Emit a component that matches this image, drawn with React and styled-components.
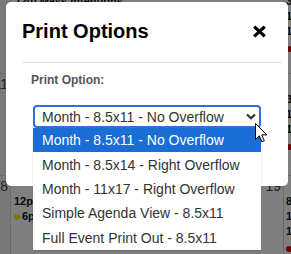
import React from "react";
import styled, { createGlobalStyle } from "styled-components";

const Global = createGlobalStyle`
  html, body { margin: 0; padding: 0; width: 291px; height: 254px; overflow: hidden; background: #fff; }
  body { font-family: "Liberation Sans", Arial, sans-serif; }
  #root { width: 291px; height: 254px; overflow: hidden; }
  * { box-sizing: border-box; }
`;

const Page = styled.div`
  position: relative;
  width: 291px;
  height: 254px;
  overflow: hidden;
`;

const Calendar = styled.div`
  display: grid;
  grid-template-columns: 11px 273px 273px;
  grid-template-rows: 98px 102px 100px;
  width: 557px;
  margin-top: -24px;
  background: #fff;
`;

const Cell = styled.div`
  border-right: 1px solid #d4d4d4;
  border-bottom: 1px solid #d4d4d4;
  overflow: hidden;
  padding: 2px 2px 0 ${(p) => p.$padLeft || 0}px;
  display: flex;
  flex-direction: column;
  background: ${(p) => (p.$muted ? "#f2f2f2" : "#fff")};
`;

const DayNum = styled.div`
  display: flex;
  justify-content: flex-end;
  height: 16px;
  font-size: 14px;
  line-height: 16px;
  color: #444;
  white-space: nowrap;
`;

const Event = styled.div`
  display: flex;
  align-items: center;
  gap: 2px;
  height: 15px;
  font-size: 11px;
  font-weight: bold;
  line-height: 15px;
  color: #111;
  white-space: nowrap;
  margin-top: ${(p) => p.$mt || 0}px;
`;

const Dot = styled.span`
  display: inline-block;
  flex: none;
  width: 6px;
  height: 6px;
  border-radius: 50%;
  background: ${(p) => p.$color};
`;

const Overlay = styled.div`
  position: absolute;
  inset: 0;
  background: rgba(0, 0, 0, 0.5);
`;

const Modal = styled.div`
  position: absolute;
  left: 6px;
  top: 2px;
  width: 282px;
  height: 184px;
  background: #fff;
  border-radius: 5px;
`;

const Header = styled.div`
  margin: 0 6px 0 16px;
  padding: 17px 15px 19px 0;
  border-bottom: 1px solid #e5e5e5;
  display: flex;
  justify-content: space-between;
  align-items: center;
`;

const Title = styled.h2`
  margin: 0;
  font-size: 20px;
  line-height: 24px;
  font-weight: bold;
  color: #000;
`;

const Close = styled.button`
  border: 0;
  background: none;
  padding: 0;
  width: 15px;
  height: 13px;
  display: flex;
  cursor: pointer;
`;

const Body = styled.div`
  padding: 10px 0 0 25px;
`;

const Label = styled.label`
  display: block;
  font-size: 12px;
  line-height: 14px;
  font-weight: bold;
  color: #555;
`;

const SelectWrap = styled.div`
  position: relative;
  margin: 18px 0 0 2px;
  width: 228px;
`;

const SelectBox = styled.div`
  height: 23px;
  border: 2px solid #2d72da;
  border-radius: 4px;
  padding: 0 3px 0 7px;
  display: flex;
  align-items: center;
  justify-content: space-between;
  font-size: 14px;
  color: #333;
  background: #fff;
`;

const List = styled.ul`
  position: absolute;
  top: 100%;
  left: 0;
  width: 228px;
  margin: 0;
  padding: 0;
  list-style: none;
  background: #fff;
  box-shadow: 0 1px 2px rgba(0, 0, 0, 0.15);
`;

const Option = styled.li`
  height: 24.4px;
  padding-left: 9px;
  display: flex;
  align-items: center;
  font-size: 14px;
  white-space: nowrap;
  color: ${(p) => (p.$active ? "#fff" : "#333")};
  background: ${(p) => (p.$active ? "#1b6dd6" : "#fff")};
`;

const Pointer = styled.svg`
  position: absolute;
  left: 255px;
  top: 123px;
`;

const options = [
  "Month - 8.5x11 - No Overflow",
  "Month - 8.5x14 - Right Overflow",
  "Month - 11x17 - Right Overflow",
  "Simple Agenda View - 8.5x11",
  "Full Event Print Out - 8.5x11",
];

export default function App() {
  return (
    <Page>
      <Global />
      <Calendar>
        <Cell $muted>
          <DayNum>4</DayNum>
        </Cell>
        <Cell $padLeft={3}>
          <DayNum>5</DayNum>
          <Event>&nbsp;(20) Mass Intentions</Event>
        </Cell>
        <Cell $padLeft={2}>
          <DayNum>6</DayNum>
          <Event>3p Rosary</Event>
          <Event>10a Mass</Event>
          <Event>12p Lunch</Event>
          <Event $mt={2}>
            <Dot $color="#e00000" />
          </Event>
        </Cell>

        <Cell $muted>
          <DayNum>11</DayNum>
        </Cell>
        <Cell $padLeft={3}>
          <DayNum>12</DayNum>
        </Cell>
        <Cell $padLeft={2}>
          <DayNum>13</DayNum>
          <Event>3p Rosary</Event>
          <Event>1p Mass</Event>
          <Event>1p Choir</Event>
          <Event $mt={2}>
            <Dot $color="#e00000" />
          </Event>
        </Cell>

        <Cell $muted>
          <DayNum>18</DayNum>
        </Cell>
        <Cell $padLeft={3}>
          <DayNum>19</DayNum>
          <Event>12p</Event>
          <Event>
            <Dot $color="#f0f000" />
            6p
          </Event>
        </Cell>
        <Cell $padLeft={2}>
          <DayNum>20</DayNum>
          <Event>8a Mass</Event>
          <Event>1p Mass</Event>
          <Event>1p Choir</Event>
          <Event $mt={2}>
            <Dot $color="#e00000" />
          </Event>
        </Cell>
      </Calendar>

      <Overlay />

      <Modal>
        <Header>
          <Title>Print Options</Title>
          <Close aria-label="Close">
            <svg width="15" height="13" viewBox="0 0 15 13">
              <path d="M2.2 1.6 L12.8 11.4 M12.8 1.6 L2.2 11.4" stroke="#000" strokeWidth="3.3" fill="none" />
            </svg>
          </Close>
        </Header>
        <Body>
          <Label>Print Option:</Label>
          <SelectWrap>
            <SelectBox>
              <span>{options[0]}</span>
              <svg width="10" height="7" viewBox="0 0 10 7">
                <path d="M1 1.5 L5 5.3 L9 1.5" stroke="#333" strokeWidth="2.2" fill="none" />
              </svg>
            </SelectBox>
            <List>
              {options.map((o, i) => (
                <Option key={o} $active={i === 0}>
                  {o}
                </Option>
              ))}
            </List>
          </SelectWrap>
        </Body>
      </Modal>

      <Pointer width="13" height="21" viewBox="0 0 13 21">
        <path
          d="M0.5 0.5 L0.5 16.5 L4.3 12.8 L6.8 18.8 L9.3 17.8 L6.8 11.9 L11.8 11.9 Z"
          fill="#fff"
          stroke="#000"
          strokeWidth="1"
          strokeLinejoin="miter"
        />
      </Pointer>
    </Page>
  );
}
